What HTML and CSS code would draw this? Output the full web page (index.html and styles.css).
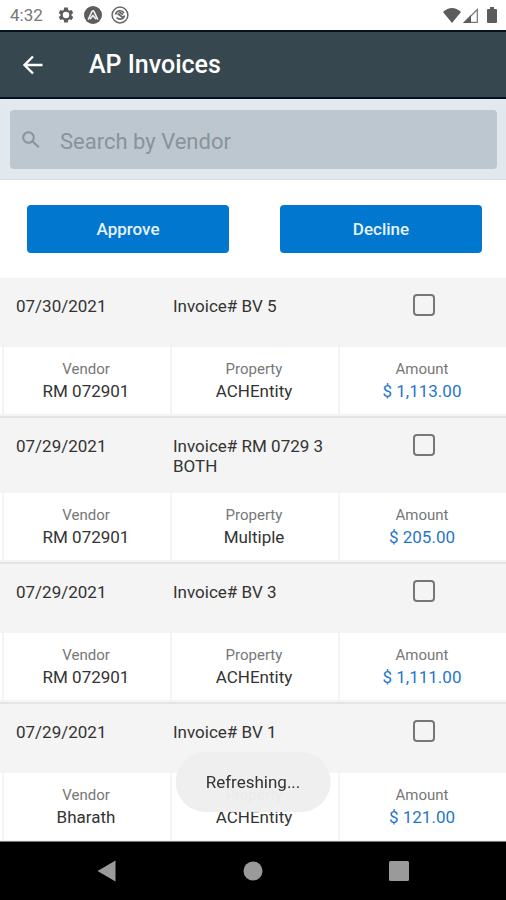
FILE: index.html
```html
<!DOCTYPE html>
<html lang="en">
<head>
    <meta charset="UTF-8">
    <meta name="viewport" content="width=device-width, initial-scale=1.0">
    <title>AP Invoices</title>
    <link rel="stylesheet" href="styles.css">
</head>
<body>

<div class="status-bar">
    <span class="clock">4:32</span>
    <svg width="18" height="18" viewBox="0 0 24 24"><path fill="#5c5c5c" fill-rule="evenodd" d="M19.4 13a7.600 7.600 0 0 0 0-2l2.300-1.800-2.200-3.900-2.800 1.100a7 7 0 0 0-1.800-1L14.500 2h-5l-.4 3.400a7 7 0 0 0-1.800 1L4.500 5.300 2.300 9.200 4.600 11a7.600 7.600 0 0 0 0 2l-2.300 1.800 2.200 3.900 2.800-1.100a7 7 0 0 0 1.800 1l.4 3.400h5l.4-3.400a7 7 0 0 0 1.800-1l2.800 1.100 2.200-3.900zM12 16.300a4.300 4.300 0 1 1 0-8.600 4.300 4.300 0 0 1 0 8.600z"/></svg>
    <svg width="18" height="18" viewBox="0 0 18 18"><circle cx="9" cy="9" r="9" fill="#5c5c5c"/><path d="M4.500 13L8 5.500q1-1.500 2 0l3.500 7.500M6.500 12.500L9 9.500l2.500 3" fill="none" stroke="#eee" stroke-width="1.700" stroke-linecap="round" stroke-linejoin="round"/></svg>
    <svg width="18" height="18" viewBox="0 0 18 18" fill="none" stroke="#666"><circle cx="9" cy="9" r="7.900" stroke-width="1.500"/><path d="M4.500 8.500a4.600 4.600 0 0 1 8.500-1.500M13.500 9.500a4.600 4.600 0 0 1-8 2" stroke-width="1.600"/><path d="M6.500 7.500l5.500 4M8 6l4 2.500" stroke-width="1.800"/></svg>
    <div class="signals">
        <svg width="18" height="15" viewBox="0 0 18 15"><path d="M0 4Q9-4 18 4L9 15z" fill="#5c5c5c"/></svg>
        <svg width="15" height="15" viewBox="0 0 15 15"><path d="M1.500 14.300L14.300 1.500v12.800z" fill="none" stroke="#777" stroke-width="1.200"/><path d="M0 15l8-8v8z" fill="#5c5c5c"/></svg>
    </div>
    <svg width="10" height="16" viewBox="0 0 10 16"><path d="M3 0h4v2h2q1 0 1 1v12q0 1-1 1H1q-1 0-1-1V3q0-1 1-1h2z" fill="#5c5c5c"/></svg>
</div>

<header class="app-header">
    <button class="back" aria-label="Back">
        <svg width="22" height="20" viewBox="0 0 22 20"><path d="M20.500 10H2.500M11 1.500L2.500 10l8.500 8.500" fill="none" stroke="#fff" stroke-width="2.400"/></svg>
    </button>
    <h1>AP Invoices</h1>
</header>

<div class="search-bar">
    <label class="search-box">
        <svg width="18" height="17" viewBox="0 0 18 17" fill="none" stroke="#89939a" stroke-width="2"><circle cx="6.500" cy="6.500" r="5.300"/><path d="M10.500 10.300l6.300 5.900"/></svg>
        <input type="text" placeholder="Search by Vendor" aria-label="Search by Vendor">
    </label>
</div>

<div class="actions">
    <div class="action"><button>Approve</button></div>
    <div class="action"><button>Decline</button></div>
</div>

<main class="invoices">
    <section class="invoice">
        <div class="invoice-head">
            <span class="date">07/30/2021</span>
            <label class="number" for="inv1">Invoice# BV 5</label>
            <input type="checkbox" id="inv1">
        </div>
        <div class="cells">
            <div class="cell"><span class="name">Vendor</span><span>RM 072901</span></div>
            <div class="cell"><span class="name">Property</span><span>ACHEntity</span></div>
            <div class="cell"><span class="name">Amount</span><span class="amount">$ 1,113.00</span></div>
        </div>
    </section>

    <section class="invoice">
        <div class="invoice-head">
            <span class="date">07/29/2021</span>
            <label class="number" for="inv2">Invoice# RM 0729 3 BOTH</label>
            <input type="checkbox" id="inv2">
        </div>
        <div class="cells">
            <div class="cell"><span class="name">Vendor</span><span>RM 072901</span></div>
            <div class="cell"><span class="name">Property</span><span>Multiple</span></div>
            <div class="cell"><span class="name">Amount</span><span class="amount">$ 205.00</span></div>
        </div>
    </section>

    <section class="invoice">
        <div class="invoice-head">
            <span class="date">07/29/2021</span>
            <label class="number" for="inv3">Invoice# BV 3</label>
            <input type="checkbox" id="inv3">
        </div>
        <div class="cells">
            <div class="cell"><span class="name">Vendor</span><span>RM 072901</span></div>
            <div class="cell"><span class="name">Property</span><span>ACHEntity</span></div>
            <div class="cell"><span class="name">Amount</span><span class="amount">$ 1,111.00</span></div>
        </div>
    </section>

    <section class="invoice">
        <div class="invoice-head">
            <span class="date">07/29/2021</span>
            <label class="number" for="inv4">Invoice# BV 1</label>
            <input type="checkbox" id="inv4">
        </div>
        <div class="cells">
            <div class="cell"><span class="name">Vendor</span><span>Bharath</span></div>
            <div class="cell"><span class="name">Property</span><span>ACHEntity</span></div>
            <div class="cell"><span class="name">Amount</span><span class="amount">$ 121.00</span></div>
        </div>
    </section>
</main>

<nav class="nav-bar">
    <button aria-label="Back"><svg width="20" height="22" viewBox="0 0 20 22"><path d="M18.500 0.500v21L0.500 11z" fill="#9a9a9a"/></svg></button>
    <button aria-label="Home"><svg width="20" height="20" viewBox="0 0 20 20"><circle cx="10" cy="10" r="9.500" fill="#9a9a9a"/></svg></button>
    <button aria-label="Recent apps"><svg width="20" height="20" viewBox="0 0 20 20"><rect width="20" height="20" rx="1.500" fill="#9a9a9a"/></svg></button>
</nav>

<div class="toast" role="status">Refreshing...</div>

</body>
</html>
```
FILE: styles.css
```css
* {
    box-sizing: border-box;
}
body {
    margin: 0;
    height: 100vh;
    display: flex;
    flex-direction: column;
    font-family: Roboto, sans-serif;
    font-size: 17px;
    color: #333;
    background-color: #fff;
}
button {
    border: none;
    padding: 0;
    font-family: inherit;
    cursor: pointer;
}
svg {
    display: block;
    flex: none;
}

/* status bar */
.status-bar {
    display: flex;
    align-items: center;
    gap: 9px;
    height: 30px;
    padding: 0 9px 0 10px;
    flex: none;
}
.clock {
    color: #777;
    margin-right: 5px;
}
.signals {
    display: flex;
    gap: 2px;
    margin-left: auto;
}

/* header */
.app-header {
    display: flex;
    align-items: center;
    gap: 45px;
    height: 69px;
    padding: 0 22px;
    flex: none;
    background-color: #37474f;
    border-top: 2px solid #04121f;
    border-bottom: 2px solid #04121f;
}
.app-header h1 {
    margin: 0;
    font-size: 25px;
    font-weight: 500;
    color: #fff;
}
.back {
    background: none;
}

/* search */
.search-bar {
    flex: none;
    padding: 11px 9px 10px 10px;
    background-color: #e1e8ee;
    border-bottom: 1px solid #d9dde0;
}
.search-box {
    display: flex;
    align-items: center;
    gap: 20px;
    height: 59px;
    padding: 0 12px;
    background-color: #bdc7cf;
    border-radius: 4px;
}
.search-box input {
    flex: 1;
    min-width: 0;
    border: none;
    outline: none;
    padding: 3px 0 0;
    background: none;
    font-family: inherit;
    font-size: 22px;
    color: #333;
}
.search-box input::placeholder {
    color: #89939a;
}

/* approve / decline */
.actions {
    display: flex;
    flex: none;
    padding: 25px 0;
}
.action {
    flex: 1;
    padding: 0 24px 0 27px;
}
.action button {
    width: 100%;
    height: 48px;
    background-color: #0277cf;
    border-radius: 4px;
    color: #e8f2ff;
    font-size: 17px;
    font-weight: 500;
}

/* invoices */
.invoices {
    flex: 1;
    min-height: 0;
    overflow: hidden;
}
.invoice {
    border-bottom: 2px solid #e4e4e4;
}
.invoice-head {
    display: grid;
    grid-template-columns: repeat(3, 1fr);
    align-items: start;
    min-height: 69px;
    padding: 18px 0 17px 2px;
    background-color: #f4f4f4;
    line-height: 20px;
}
.date {
    padding-left: 14px;
}
.number {
    padding-left: 3px;
}
.invoice-head input {
    appearance: none;
    justify-self: center;
    width: 22px;
    height: 22px;
    margin: -2px 0 0 4px;
    border: 2px solid #777;
    border-radius: 4px;
}
.invoice-head input:checked {
    background-color: #0277cf;
}
.cells {
    display: grid;
    grid-template-columns: repeat(3, 1fr);
    padding-left: 2px;
    background-color: #fff;
    border-bottom: 2px solid #f4f4f4;
}
.cell {
    display: flex;
    flex-direction: column;
    align-items: center;
    padding: 11px 2px 12px 0;
    border-left: 2px solid #f4f4f4;
    line-height: 22px;
}
.name {
    font-size: 15px;
    color: #777;
}
.amount {
    color: #1f76cc;
}

/* android navigation */
.nav-bar {
    display: flex;
    justify-content: center;
    gap: 126px;
    height: 59px;
    flex: none;
    background-color: #000;
    border-top: 1px solid #777;
}
.nav-bar button {
    background: none;
}

.toast {
    position: fixed;
    left: 50%;
    bottom: 88px;
    transform: translateX(-50%);
    padding: 20px 30px;
    border-radius: 30px;
    background-color: rgba(238, 238, 238, 0.96);
    line-height: 20px;
}
```
